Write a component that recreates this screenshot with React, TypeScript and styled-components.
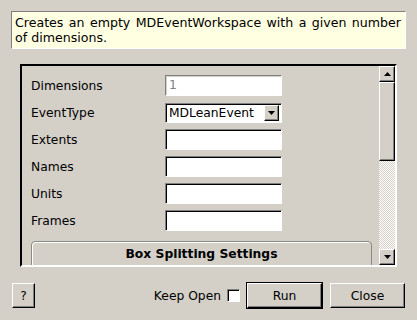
import React from 'react';
import styled, { createGlobalStyle } from 'styled-components';

const GlobalStyle = createGlobalStyle`
  html, body {
    margin: 0;
    padding: 0;
    background: #d4d0c8;
  }
  body {
    font-family: 'DejaVu Sans', 'Liberation Sans', sans-serif;
    font-size: 12.3px;
    color: #000;
  }
`;

const Dialog = styled.div`
  width: 417px;
  height: 320px;
  box-sizing: border-box;
  padding: 11px 11px 11px 11px;
  display: flex;
  flex-direction: column;
  background: #d4d0c8;
`;

const Description = styled.div`
  height: 38px;
  box-sizing: border-box;
  border: 1px solid;
  border-color: #808080 #fff #fff #808080;
  background: #ffffe1;
  padding: 3px 4px 0 3px;
  font-size: 12.6px;
  line-height: 15px;
  text-align: justify;
`;

const ScrollFrame = styled.div`
  margin: 15px 9px 0 9px;
  height: 203px;
  box-sizing: border-box;
  border: 2px solid;
  border-color: #000 #fff #fff #000;
  display: flex;
`;

const Viewport = styled.div`
  flex: 1;
  overflow: hidden;
  padding: 9px 7px 0 9px;
`;

const FormGrid = styled.div`
  display: grid;
  grid-template-columns: 134px 117px;
  grid-auto-rows: 21px;
  row-gap: 6px;
  align-items: center;
`;

const Label = styled.div`
  white-space: nowrap;
`;

const TextBox = styled.div<{ disabled?: boolean }>`
  height: 21px;
  box-sizing: border-box;
  border: 1px solid;
  border-color: #808080 #fff #fff #808080;
  box-shadow: inset 1px 1px ${p => (p.disabled ? '#d4d0c8' : '#000')};
  background: #fff;
  color: ${p => (p.disabled ? '#808080' : '#000')};
  padding: 2px 0 0 3px;
  line-height: 15px;
`;

const Combo = styled.div`
  height: 20px;
  box-sizing: border-box;
  border: 1px solid;
  border-color: #808080 #fff #fff #808080;
  box-shadow: inset 1px 1px #000;
  background: #fff;
  display: flex;
  align-items: center;
  padding: 1px 2px 0 3px;
  justify-content: space-between;
`;

const RaisedButton = styled.div<{ w: number; h: number }>`
  width: ${p => p.w}px;
  height: ${p => p.h}px;
  box-sizing: border-box;
  background: #d4d0c8;
  border: 1px solid;
  border-color: #fff #000 #000 #fff;
  box-shadow: inset -1px -1px #808080;
  display: flex;
  align-items: center;
  justify-content: center;
  flex-shrink: 0;
`;

const GroupBox = styled.div`
  margin-top: 10px;
  height: 60px;
  border: 1px solid #8c8a85;
  border-radius: 4px;
  box-shadow: inset 1px 1px #fff;
`;

const GroupTitle = styled.div`
  font-weight: bold;
  text-align: center;
  padding-top: 5px;
  line-height: 15px;
`;

const ScrollBar = styled.div`
  width: 16px;
  display: flex;
  flex-direction: column;
`;

const Slider = styled.div`
  height: 79px;
  box-sizing: border-box;
  background: #d4d0c8;
  border: 1px solid;
  border-color: #fff #000 #000 #fff;
  box-shadow: inset -1px -1px #808080;
`;

const Trough = styled.div`
  flex: 1;
  background: repeating-conic-gradient(#fff 0 25%, #d4d0c8 0 50%) 0 0 / 2px 2px;
`;

const ButtonRow = styled.div`
  margin-top: 15px;
  height: 27px;
  display: flex;
  align-items: center;
  padding: 0 1px;
`;

const Spacer = styled.div`
  flex: 1;
`;

const CheckLabel = styled.span`
  margin-right: 6px;
`;

const CheckBox = styled.div`
  width: 13px;
  height: 13px;
  box-sizing: border-box;
  border: 1px solid;
  border-color: #808080 #fff #fff #808080;
  box-shadow: inset 1px 1px #000;
  background: #fff;
  margin-right: 6px;
`;

const DefaultOutline = styled.div`
  border: 1px solid #000;
  margin-right: 7px;
  display: flex;
`;

const Arrow: React.FC<{ down?: boolean }> = ({ down }) => (
  <svg width="7" height="4" viewBox="0 0 7 4">
    <polygon points={down ? '0,0 7,0 3.5,4' : '0,4 7,4 3.5,0'} fill="#000" />
  </svg>
);

const fields: { label: string; value?: string; disabled?: boolean }[] = [
  { label: 'Extents' },
  { label: 'Names' },
  { label: 'Units' },
  { label: 'Frames' },
];

const App: React.FC = () => (
  <>
    <GlobalStyle />
    <Dialog>
      <Description>
        Creates an empty MDEventWorkspace with a given number of dimensions.
      </Description>
      <ScrollFrame>
        <Viewport>
          <FormGrid>
            <Label>Dimensions</Label>
            <TextBox disabled>1</TextBox>
            <Label>EventType</Label>
            <Combo>
              <span>MDLeanEvent</span>
              <RaisedButton w={15} h={16}>
                <Arrow down />
              </RaisedButton>
            </Combo>
            {fields.map(f => (
              <React.Fragment key={f.label}>
                <Label>{f.label}</Label>
                <TextBox />
              </React.Fragment>
            ))}
          </FormGrid>
          <GroupBox>
            <GroupTitle>Box Splitting Settings</GroupTitle>
          </GroupBox>
        </Viewport>
        <ScrollBar>
          <RaisedButton w={16} h={16}>
            <Arrow />
          </RaisedButton>
          <Slider />
          <Trough />
          <RaisedButton w={16} h={16}>
            <Arrow down />
          </RaisedButton>
        </ScrollBar>
      </ScrollFrame>
      <ButtonRow>
        <RaisedButton w={23} h={25}>?</RaisedButton>
        <Spacer />
        <CheckLabel>Keep Open</CheckLabel>
        <CheckBox />
        <DefaultOutline>
          <RaisedButton w={75} h={25}>Run</RaisedButton>
        </DefaultOutline>
        <RaisedButton w={75} h={25}>Close</RaisedButton>
      </ButtonRow>
    </Dialog>
  </>
);

export default App;
